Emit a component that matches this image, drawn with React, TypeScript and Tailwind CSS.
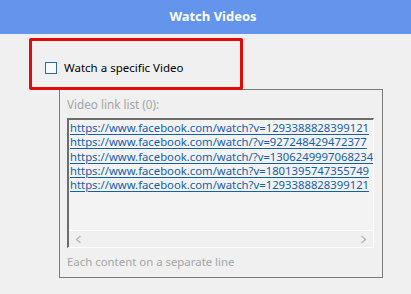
import React from 'react'

const links = [
  'https://www.facebook.com/watch?v=1293388828399121',
  'https://www.facebook.com/watch/?v=927248429472377',
  'https://www.facebook.com/watch/?v=1306249997068234',
  'https://www.facebook.com/watch?v=1801395747355749',
  'https://www.facebook.com/watch?v=1293388828399121',
]

const font = { fontFamily: '"Noto Sans", "Liberation Sans", sans-serif' }

export default function App() {
  return (
    <div className="w-[411px] h-[294px] bg-[#f0f0f0] overflow-hidden" style={font}>
      {/* Title bar */}
      <div className="h-[34px] bg-[#6495ed] flex items-center justify-center pl-[15px]">
        <span className="text-white font-bold text-[13px]">Watch Videos</span>
      </div>

      {/* Highlighted option */}
      <div className="relative z-10 ml-[29px] mt-[4px] w-[214px] h-[52px] border-[3px] border-[#e10a0a] rounded-[2px] flex items-center pl-[13px] pt-[7px]">
        <span className="w-[12px] h-[12px] border border-[#2f6a96] bg-[#f7fbff] shrink-0"></span>
        <span className="ml-[7px] text-[11.5px] text-black leading-[16px]">Watch a specific Video</span>
      </div>

      {/* Group box */}
      <div className="-mt-[1px] ml-[59px] w-[324px] h-[189px] border border-[#7b7b7b] px-[7px] pt-[6px]">
        <div className="text-[11.7px] leading-[16px] text-[#a5a5a5]">Video link list (0):</div>

        <div className="mt-[6px] w-[307px] h-[130px] flex flex-col border-t-2 border-l-2 border-[#6d6d6d] border-r border-b border-r-white border-b-white bg-[#f3f3f3] overflow-hidden">
          <div className="flex-1 pt-[1px] pl-[1px] overflow-hidden">
            {links.map((l, i) => (
              <div key={i} className="text-[11.3px] leading-[14.3px] whitespace-nowrap text-[#1660a8] underline underline-offset-[2px]">
                {l}
              </div>
            ))}
          </div>
          <div className="h-[17px] border-t border-white flex items-center justify-between px-[6px] bg-[#f0f0f0]">
            <svg width="7" height="9" viewBox="0 0 7 9" fill="none">
              <path d="M5.5 1 L1.5 4.5 L5.5 8" stroke="#b4b4b4" strokeWidth="1.3" />
            </svg>
            <svg width="7" height="9" viewBox="0 0 7 9" fill="none">
              <path d="M1.5 1 L5.5 4.5 L1.5 8" stroke="#b4b4b4" strokeWidth="1.3" />
            </svg>
          </div>
        </div>

        <div className="mt-[6px] text-[11.4px] leading-[16px] text-[#a5a5a5]">Each content on a separate line</div>
      </div>
    </div>
  )
}
